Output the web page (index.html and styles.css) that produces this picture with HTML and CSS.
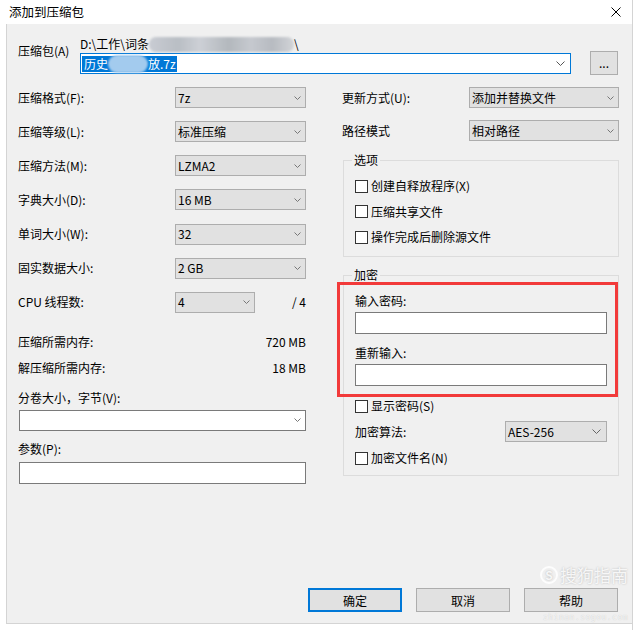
FILE: index.html
```html
<!DOCTYPE html>
<html lang="zh-CN">
<head>
  <meta charset="UTF-8" />
  <title>添加到压缩包</title>
  <link rel="stylesheet" href="styles.css">
</head>
<body>
<div class="window">
  <div class="titlebar">
    <span class="title">添加到压缩包</span>
    <svg class="close" width="10" height="10" viewBox="0 0 10 10"><path d="M0.5 0.5L9.5 9.5M9.5 0.5L0.5 9.5" stroke="#000" stroke-width="1" fill="none"/></svg>
  </div>

  <div class="dialog">
    <div class="archive-row">
      <label class="archive-label">压缩包(A)</label>
      <div class="archive-field">
        <div class="path">D:\工作\词条<span class="smudge"></span>\</div>
        <div class="combo focused">
          <span class="selected">历史<span class="smudge-sel"></span>放.7z</span>
          <svg class="arrow big" width="9" height="5" viewBox="0 0 9 5"><path d="M0.5 0.5L4.5 4.5L8.5 0.5" stroke="#555" fill="none"/></svg>
        </div>
      </div>
      <button class="browse">...</button>
    </div>

    <div class="columns">
      <div class="col-left">
        <div class="row">
          <label>压缩格式(F):</label>
          <div class="select">7z<svg class="arrow" width="7" height="4" viewBox="0 0 7 4"><path d="M0.5 0.5L3.5 3.5L6.5 0.5" stroke="#777" fill="none"/></svg></div>
        </div>
        <div class="row">
          <label>压缩等级(L):</label>
          <div class="select">标准压缩<svg class="arrow" width="7" height="4" viewBox="0 0 7 4"><path d="M0.5 0.5L3.5 3.5L6.5 0.5" stroke="#777" fill="none"/></svg></div>
        </div>
        <div class="row">
          <label>压缩方法(M):</label>
          <div class="select">LZMA2<svg class="arrow" width="7" height="4" viewBox="0 0 7 4"><path d="M0.5 0.5L3.5 3.5L6.5 0.5" stroke="#777" fill="none"/></svg></div>
        </div>
        <div class="row">
          <label>字典大小(D):</label>
          <div class="select">16 MB<svg class="arrow" width="7" height="4" viewBox="0 0 7 4"><path d="M0.5 0.5L3.5 3.5L6.5 0.5" stroke="#777" fill="none"/></svg></div>
        </div>
        <div class="row">
          <label>单词大小(W):</label>
          <div class="select">32<svg class="arrow" width="7" height="4" viewBox="0 0 7 4"><path d="M0.5 0.5L3.5 3.5L6.5 0.5" stroke="#777" fill="none"/></svg></div>
        </div>
        <div class="row">
          <label>固实数据大小:</label>
          <div class="select">2 GB<svg class="arrow" width="7" height="4" viewBox="0 0 7 4"><path d="M0.5 0.5L3.5 3.5L6.5 0.5" stroke="#777" fill="none"/></svg></div>
        </div>
        <div class="row">
          <label>CPU 线程数:</label>
          <div class="select short">4<svg class="arrow" width="7" height="4" viewBox="0 0 7 4"><path d="M0.5 0.5L3.5 3.5L6.5 0.5" stroke="#777" fill="none"/></svg></div>
          <span class="of">/ 4</span>
        </div>

        <div class="info first"><span>压缩所需内存:</span><span>720 MB</span></div>
        <div class="info"><span>解压缩所需内存:</span><span>18 MB</span></div>

        <label class="stack-label split">分卷大小，字节(V):</label>
        <div class="combo wide">
          <span></span>
          <svg class="arrow" width="7" height="4" viewBox="0 0 7 4"><path d="M0.5 0.5L3.5 3.5L6.5 0.5" stroke="#777" fill="none"/></svg>
        </div>
        <label class="stack-label params">参数(P):</label>
        <div class="textbox wide"></div>
      </div>

      <div class="col-right">
        <div class="row">
          <label>更新方式(U):</label>
          <div class="select">添加并替换文件<svg class="arrow" width="7" height="4" viewBox="0 0 7 4"><path d="M0.5 0.5L3.5 3.5L6.5 0.5" stroke="#777" fill="none"/></svg></div>
        </div>
        <div class="row">
          <label>路径模式</label>
          <div class="select">相对路径<svg class="arrow" width="7" height="4" viewBox="0 0 7 4"><path d="M0.5 0.5L3.5 3.5L6.5 0.5" stroke="#777" fill="none"/></svg></div>
        </div>

        <fieldset class="group options">
          <legend>选项</legend>
          <div class="check"><span class="box"></span>创建自释放程序(X)</div>
          <div class="check"><span class="box"></span>压缩共享文件</div>
          <div class="check"><span class="box"></span>操作完成后删除源文件</div>
        </fieldset>

        <fieldset class="group encrypt">
          <legend>加密</legend>
          <div class="highlight">
            <label class="field-label">输入密码:</label>
            <div class="textbox"></div>
            <label class="field-label second">重新输入:</label>
            <div class="textbox"></div>
          </div>
          <div class="check show-pass"><span class="box"></span>显示密码(S)</div>
          <div class="algo">
            <label>加密算法:</label>
            <div class="select">AES-256<svg class="arrow" width="9" height="5" viewBox="0 0 9 5"><path d="M0.5 0.5L4.5 4.5L8.5 0.5" stroke="#666" fill="none"/></svg></div>
          </div>
          <div class="check names"><span class="box"></span>加密文件名(N)</div>
        </fieldset>
      </div>
    </div>

    <div class="buttons">
      <button class="btn default">确定</button>
      <button class="btn">取消</button>
      <button class="btn">帮助</button>
    </div>

    <div class="watermark">
      <div class="wm-main"><span class="wm-s">S</span>搜狗指南</div>
    </div>
    <div class="wm-url">zhinan.sogou.com</div>
  </div>
</div>
</body>
</html>
```

FILE: styles.css
```css
* {
  box-sizing: border-box;
}
body {
  margin: 0;
  background: #ffffff;
  font-family: "Noto Sans CJK SC", "Noto Sans", sans-serif;
  font-size: 12px;
  line-height: 16px;
  color: #000;
}
.window {
  width: 633px;
  height: 630px;
  border-right: 1px solid #d4d4d4;
}
.titlebar {
  height: 24px;
  display: flex;
  justify-content: space-between;
  align-items: center;
  padding: 0 11px 0 9px;
  background: #fff;
}
.title {
  font-size: 12.5px;
}
.close {
  margin-top: -1px;
}
.dialog {
  position: relative;
  margin-left: 6px;
  width: 626px;
  height: 600px;
  background: #f0f0f0;
  border-left: 1px solid #d4d4d4;
  border-bottom: 1px solid #d4d4d4;
  padding: 12px 13px 0 11px;
  display: flex;
  flex-direction: column;
}

/* archive path */
.archive-row {
  display: flex;
  align-items: flex-start;
}
.archive-label {
  width: 62px;
  margin-top: 7px;
}
.archive-field {
  width: 491px;
}
.path {
  height: 16px;
  white-space: nowrap;
  display: flex;
  align-items: center;
}
.smudge {
  display: inline-block;
  width: 145px;
  height: 15px;
  border-radius: 7px;
  background: linear-gradient(90deg, #c9ccd3 0%, #b9bec4 20%, #cdd0d6 35%, #b3b8bd 55%, #c6c9cf 70%, #b7bbc1 85%, #d2d4d8 100%);
  filter: blur(1px);
}
.combo {
  height: 21px;
  margin-top: 1px;
  display: flex;
  align-items: center;
  justify-content: space-between;
  background: #fff;
  border: 1px solid #7a7a7a;
  padding: 0 4px 0 1px;
}
.combo.focused {
  border-color: #0078d7;
  padding-right: 5px;
}
.selected {
  background: #0078d7;
  color: #fff;
  height: 16px;
  padding: 0 1px 0 2px;
  display: flex;
  align-items: center;
}
.smudge-sel {
  display: inline-block;
  width: 40px;
  height: 18px;
  border-radius: 9px;
  background: #a3cbee;
  filter: blur(1px);
}
.browse {
  margin: 15px 0 0 19px;
  width: 28px;
  height: 24px;
  background: #e1e1e1;
  border: 1px solid #adadad;
  font-family: inherit;
  font-size: 12px;
  padding: 0;
  line-height: 16px;
}

/* columns */
.columns {
  display: grid;
  grid-template-columns: 288px 277px;
  column-gap: 36px;
  margin-top: 12px;
}
.row {
  display: flex;
  align-items: center;
  height: 21px;
}
.col-left .row {
  margin-bottom: 13.17px;
}
.col-left .row:nth-child(7) {
  margin-bottom: 0;
}
.col-left .row label {
  width: 157px;
}
.col-right .row {
  margin-bottom: 12px;
}
.col-right .row label {
  width: 127px;
}
.select {
  flex: 1;
  height: 21px;
  display: flex;
  align-items: center;
  justify-content: space-between;
  background: #e1e1e1;
  border: 1px solid #adadad;
  padding: 0 4px 0 2px;
  white-space: nowrap;
}
.select.short {
  flex: 0 0 80px;
}
.of {
  margin-left: auto;
}
.arrow {
  flex-shrink: 0;
}
.info {
  display: flex;
  justify-content: space-between;
  margin-top: 10px;
}
.info.first {
  margin-top: 21px;
}
.stack-label {
  display: block;
}
.stack-label.split {
  margin-top: 14px;
}
.stack-label.params {
  margin-top: 10px;
}
.wide {
  margin-left: 1px;
}
.combo.wide {
  margin-top: 4px;
}
.textbox {
  height: 22px;
  background: #fff;
  border: 1px solid #7a7a7a;
}
.textbox.wide {
  margin-top: 5px;
}

/* group boxes */
.group {
  margin: 0 0 0 1px;
  border: 1px solid #dcdcdc;
  padding: 0 11px 0 11px;
  min-width: 0;
}
.group legend {
  padding: 0 2px;
  margin-left: -3px;
  line-height: 16px;
}
.options {
  margin-top: -1px;
  padding-bottom: 11px;
}
.check {
  display: flex;
  align-items: center;
  height: 16px;
  margin-top: 9.5px;
}
.options legend + .check {
  margin-top: 10px;
}
.box {
  width: 13px;
  height: 13px;
  border: 1px solid #333;
  background: #fff;
  margin-right: 3px;
}
.encrypt {
  margin-top: 10px;
  padding-bottom: 9px;
}
.highlight {
  margin: -1px -11px -11px -18px;
  padding: 8px 8px 8px 15px;
  border: 3px solid #f23a3a;
}
.field-label {
  display: block;
}
.field-label.second {
  margin-top: 11px;
}
.highlight .textbox {
  margin-top: 3px;
}
.check.show-pass {
  margin-top: 12px;
}
.algo {
  display: flex;
  align-items: center;
  justify-content: space-between;
  margin-top: 7px;
}
.algo .select {
  flex: 0 0 102px;
  padding-right: 5px;
}
.check.names {
  margin-top: 8px;
}

/* bottom buttons */
.buttons {
  margin-top: auto;
  margin-bottom: 11px;
  display: flex;
  justify-content: flex-end;
  gap: 14px;
  padding-right: 1px;
}
.btn {
  width: 94px;
  height: 24px;
  background: #e1e1e1;
  border: 1px solid #adadad;
  font-family: inherit;
  font-size: 12px;
  color: #000;
  padding: 0;
}
.btn.default {
  border: 2px solid #0078d7;
}

/* watermark of the screenshot source, lies over the dialog */
.watermark {
  position: absolute;
  left: 533px;
  top: 540px;
  color: rgba(255, 255, 255, 0.85);
  text-shadow: 0 0 2px rgba(0, 0, 0, 0.25);
  pointer-events: none;
}
.wm-main {
  font-size: 17px;
  line-height: 22px;
  display: flex;
  align-items: center;
}
.wm-s {
  display: inline-block;
  width: 18px;
  height: 18px;
  border: 2px solid rgba(255, 255, 255, 0.85);
  border-radius: 50%;
  font-size: 12px;
  line-height: 14px;
  text-align: center;
  font-weight: bold;
  margin-right: 2px;
}
.wm-url {
  position: absolute;
  left: 536px;
  top: 589px;
  font-family: "DejaVu Sans Mono", monospace;
  font-size: 8px;
  line-height: 10px;
  letter-spacing: 0.5px;
  color: rgba(255, 255, 255, 0.75);
  text-shadow: 0 0 1px rgba(0, 0, 0, 0.2);
  pointer-events: none;
}
```
